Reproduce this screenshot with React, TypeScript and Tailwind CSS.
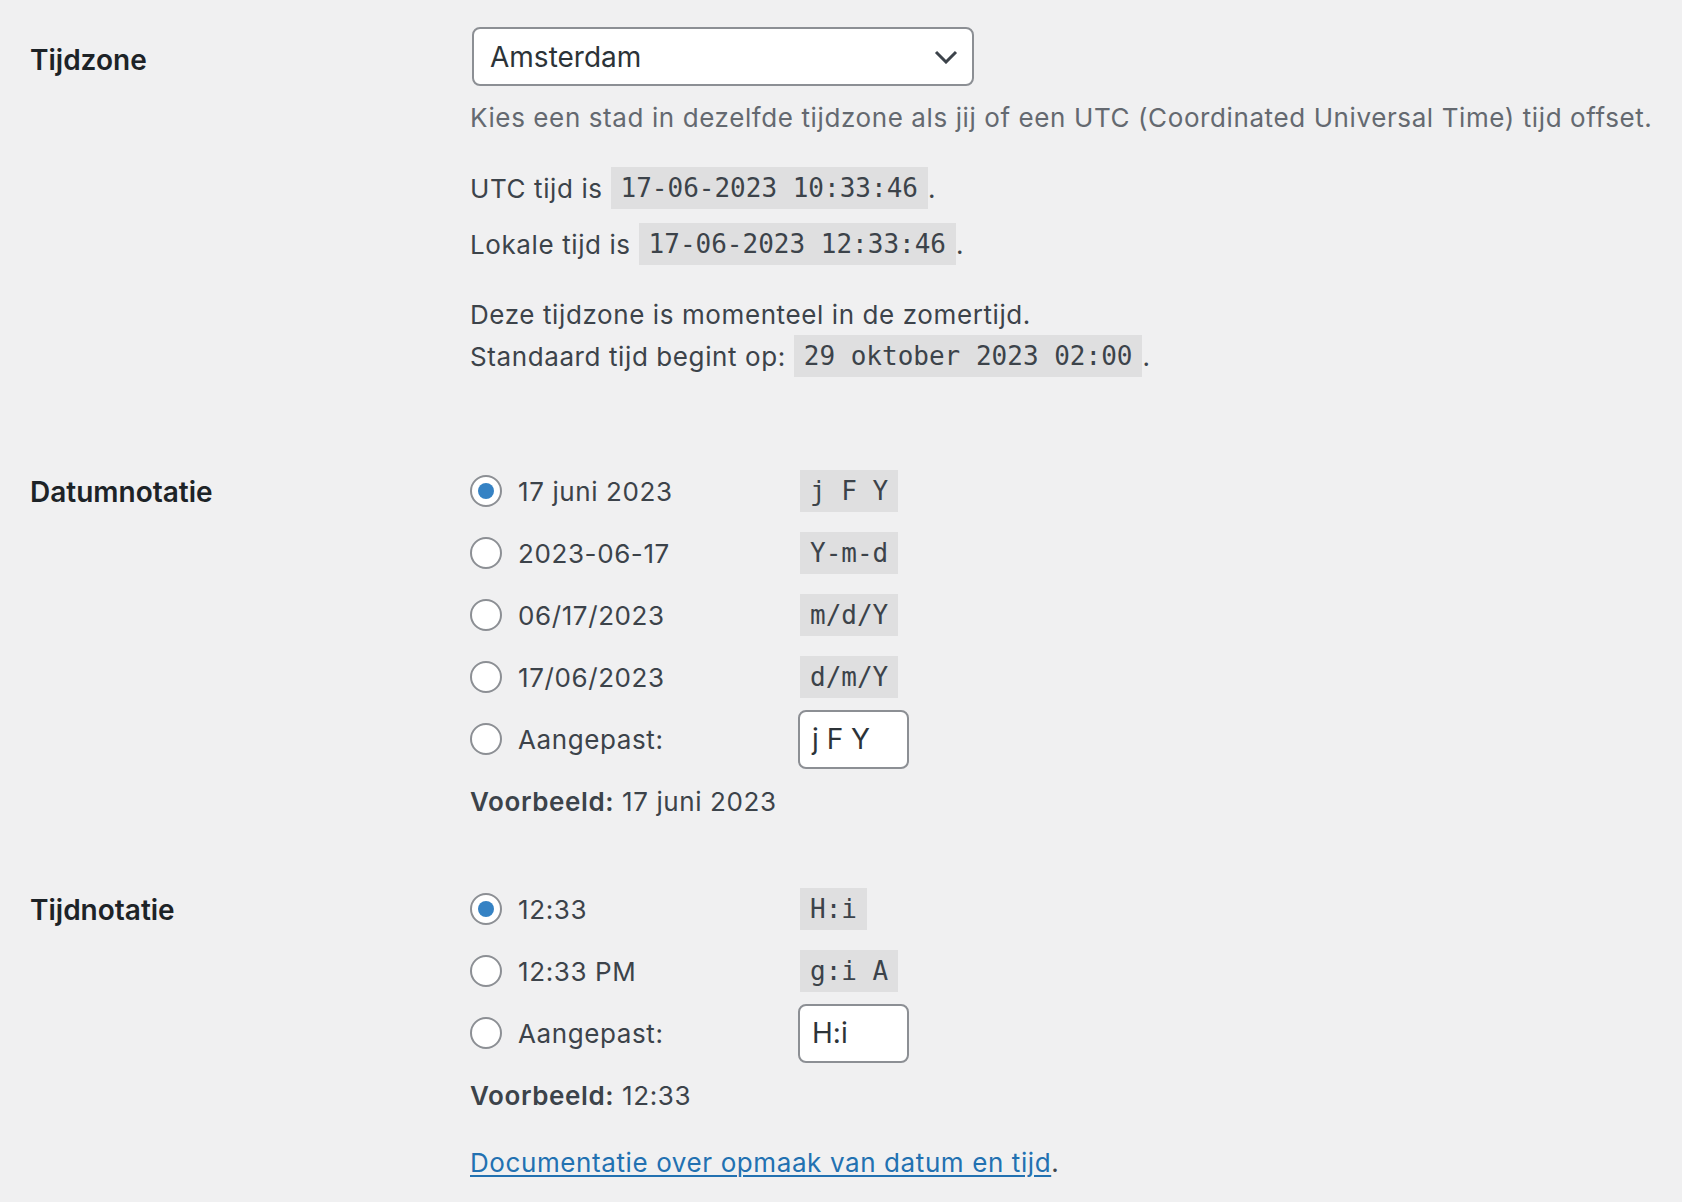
import type { ReactNode } from "react";

const dateFormats = [
  { label: "17 juni 2023", code: "j F Y", checked: true },
  { label: "2023-06-17", code: "Y-m-d", checked: false },
  { label: "06/17/2023", code: "m/d/Y", checked: false },
  { label: "17/06/2023", code: "d/m/Y", checked: false },
];

const timeFormats = [
  { label: "12:33", code: "H:i", checked: true },
  { label: "12:33 PM", code: "g:i A", checked: false },
];

const Code = ({ children }: { children: ReactNode }) => (
  <code className="inline-flex h-[42px] items-center bg-[#dfdfe0] px-[10px] font-['DejaVu_Sans_Mono',monospace] text-[26px] leading-none tracking-normal whitespace-pre text-[#3c434a]">
    {children}
  </code>
);

const Radio = ({ checked }: { checked: boolean }) => (
  <span className="flex h-8 w-8 shrink-0 items-center justify-center rounded-full border-2 border-[#8c8f94] bg-white">
    {checked && <span className="h-4 w-4 rounded-full bg-[#3582c4]" />}
  </span>
);

const Label = ({ children, offset }: { children: ReactNode; offset: string }) => (
  <div className={`w-[440px] shrink-0 text-[28px] leading-[36px] font-semibold tracking-normal text-[#1d2327] ${offset}`}>
    {children}
  </div>
);

const FormatRow = ({ label, code, checked }: { label: string; code: string; checked: boolean }) => (
  <label className="flex h-[62px] items-center">
    <Radio checked={checked} />
    <span className="ml-4 w-[282px]">{label}</span>
    <Code>{code}</Code>
  </label>
);

const CustomRow = ({ value }: { value: string }) => (
  <label className="flex h-[62px] items-center">
    <Radio checked={false} />
    <span className="ml-4 w-[280px]">Aangepast:</span>
    <span className="flex h-[59px] w-[111px] items-center rounded-[8px] border-2 border-[#8c8f94] bg-white pl-[12px] text-[28px] tracking-normal text-[#2c3338]">
      {value}
    </span>
  </label>
);

export default function App() {
  return (
    <div className="min-h-screen bg-[#f0f0f1] pl-[30px] pt-[27px] font-['Inter',sans-serif] text-[26px] tracking-[0.6px] text-[#3c434a]">
      {/* tijdzone */}
      <div className="flex">
        <Label offset="mt-[15px]">Tijdzone</Label>
        <div className="flex flex-col">
          <div className="ml-[2px] flex h-[59px] w-[502px] items-center justify-between rounded-[8px] border-2 border-[#8c8f94] bg-white pl-[16px] pr-[14px] text-[28px] tracking-normal text-[#2c3338]">
            <span>Amsterdam</span>
            <svg width="24" height="14" viewBox="0 0 24 14" fill="none">
              <path d="M2 2l10 10 10-10" stroke="#3c434a" strokeWidth="3" />
            </svg>
          </div>
          <p className="mt-[10px] flex h-[42px] items-center text-[#646970]">
            Kies een stad in dezelfde tijdzone als jij of een UTC (Coordinated Universal Time) tijd offset.
          </p>
          <p className="mt-[29px] flex h-[42px] items-center">
            UTC tijd is&nbsp;<Code>17-06-2023 10:33:46</Code>.
          </p>
          <p className="mt-[14px] flex h-[42px] items-center">
            Lokale tijd is&nbsp;<Code>17-06-2023 12:33:46</Code>.
          </p>
          <p className="mt-[28px] flex h-[42px] items-center">Deze tijdzone is momenteel in de zomertijd.</p>
          <p className="flex h-[42px] items-center">
            Standaard tijd begint op:&nbsp;<Code>29 oktober 2023 02:00</Code>.
          </p>
        </div>
      </div>

      {/* datumnotatie */}
      <div className="mt-[83px] flex">
        <Label offset="mt-[14px]">Datumnotatie</Label>
        <div className="flex flex-col">
          {dateFormats.map((f) => (
            <FormatRow key={f.code} {...f} />
          ))}
          <CustomRow value="j F Y" />
          <p className="mt-[10px] flex h-[42px] items-center">
            <strong className="font-semibold">Voorbeeld:</strong>&nbsp;17 juni 2023
          </p>
        </div>
      </div>

      {/* tijdnotatie */}
      <div className="mt-[56px] flex pb-[19px]">
        <Label offset="mt-[14px]">Tijdnotatie</Label>
        <div className="flex flex-col">
          {timeFormats.map((f) => (
            <FormatRow key={f.code} {...f} />
          ))}
          <CustomRow value="H:i" />
          <p className="mt-[10px] flex h-[42px] items-center">
            <strong className="font-semibold">Voorbeeld:</strong>&nbsp;12:33
          </p>
          <p className="mt-[25px] flex h-[42px] items-center">
            <a href="#" className="text-[#2271b1] underline decoration-2 underline-offset-[3px]">
              Documentatie over opmaak van datum en tijd
            </a>
            .
          </p>
        </div>
      </div>
    </div>
  );
}
